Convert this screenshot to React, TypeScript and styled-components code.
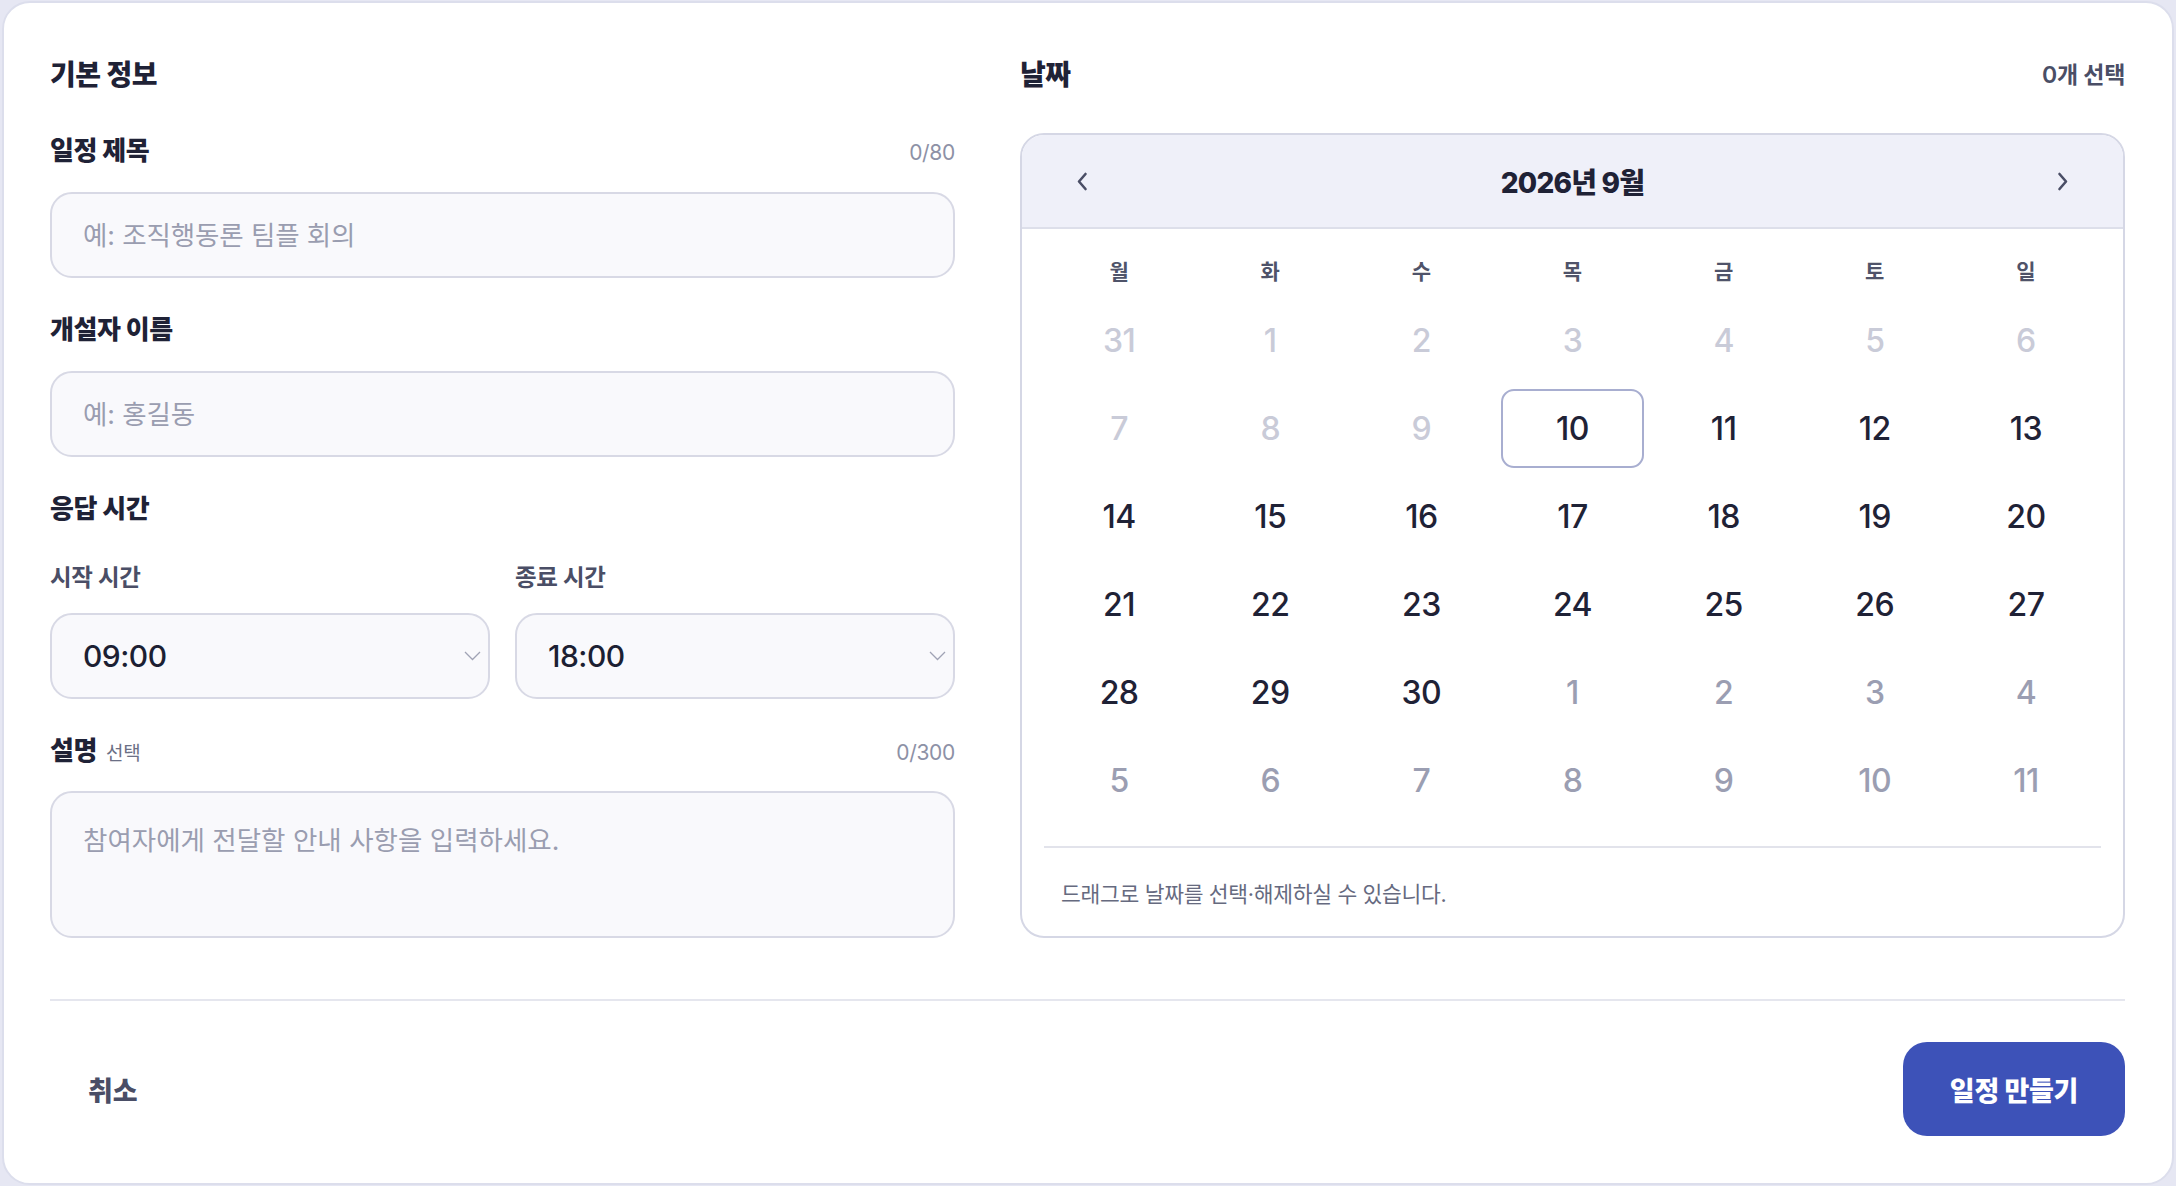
import styled, { createGlobalStyle } from "styled-components";

const GlobalStyle = createGlobalStyle`
  html, body {
    margin: 0;
    background: #e6e7f3;
  }
  body {
    font-family: "Inter", "Noto Sans CJK KR", "Noto Sans", sans-serif;
    color: #1f2236;
  }
  * {
    box-sizing: border-box;
  }
`;

const Page = styled.div`
  padding: 1px 2px;
`;

const Card = styled.div`
  background: #ffffff;
  border: 2px solid #dcdeec;
  border-radius: 28px;
  padding: 53px 47px 47px 46px;
`;

const Columns = styled.div`
  display: grid;
  grid-template-columns: 905px 1fr;
  column-gap: 65px;
`;

const Column = styled.div`
  display: flex;
  flex-direction: column;
`;

const SectionHead = styled.div`
  display: flex;
  justify-content: space-between;
  align-items: center;
  height: 34px;
  margin-bottom: 43px;
`;

const SectionTitle = styled.h2`
  margin: 0;
  font-size: 28px;
  font-weight: 800;
  letter-spacing: -0.4px;
  color: #1f2236;
`;

const SelectedCount = styled.span`
  font-size: 23px;
  font-weight: 600;
  color: #4a4e66;
  letter-spacing: -0.3px;
`;

const Fields = styled.div`
  display: flex;
  flex-direction: column;
  gap: 34px;
`;

const Field = styled.div<{ $gap?: number }>`
  display: flex;
  flex-direction: column;
  gap: ${(p) => p.$gap ?? 23}px;
`;

const FieldHead = styled.div`
  display: flex;
  justify-content: space-between;
  align-items: baseline;
  height: 36px;
  line-height: 36px;
`;

const Label = styled.label`
  font-size: 26px;
  font-weight: 800;
  color: #1f2236;
  letter-spacing: -0.4px;
  display: flex;
  align-items: baseline;
  gap: 9px;
`;

const Optional = styled.span`
  font-size: 19px;
  font-weight: 400;
  color: #6b6f85;
  letter-spacing: -0.3px;
`;

const Counter = styled.span`
  font-size: 21px;
  font-weight: 400;
  color: #8d91a6;
  letter-spacing: -0.3px;
`;

const TextInput = styled.input`
  height: 86px;
  width: 100%;
  border: 2px solid #d8d9e5;
  border-radius: 22px;
  background: #f9f9fc;
  padding: 0 31px;
  font-family: "Inter", "Noto Sans CJK KR", sans-serif;
  font-size: 26.5px;
  color: #1f2236;
  outline: none;
  letter-spacing: -0.1px;

  &::placeholder {
    color: #9a9db0;
  }
`;

const TextArea = styled.textarea`
  height: 147px;
  width: 100%;
  border: 2px solid #d8d9e5;
  border-radius: 22px;
  background: #f9f9fc;
  padding: 28px 31px;
  font-family: "Inter", "Noto Sans CJK KR", sans-serif;
  font-size: 26.5px;
  line-height: 38px;
  color: #1f2236;
  outline: none;
  resize: none;
  letter-spacing: 0;

  &::placeholder {
    color: #9a9db0;
  }
`;

const TimeGrid = styled.div`
  display: grid;
  grid-template-columns: 1fr 1fr;
  column-gap: 25px;
`;

const SubLabel = styled.span`
  font-size: 23.5px;
  font-weight: 700;
  color: #4a4e66;
  line-height: 28px;
  height: 28px;
  letter-spacing: -0.3px;
`;

const SelectBox = styled.div`
  height: 86px;
  border: 2px solid #d8d9e5;
  border-radius: 22px;
  background: #f9f9fc;
  padding: 0 7px 0 31px;
  display: flex;
  align-items: center;
  justify-content: space-between;
`;

const SelectValue = styled.span`
  font-size: 30px;
  font-weight: 500;
  color: #1c1f33;
  letter-spacing: -0.5px;
`;

const Calendar = styled.div`
  border: 2px solid #d5d7e5;
  border-radius: 24px;
  overflow: hidden;
  background: #ffffff;
`;

const CalHeader = styled.div`
  height: 94px;
  background: #eff0f9;
  border-bottom: 2px solid #dddfea;
  display: flex;
  align-items: center;
  justify-content: space-between;
  padding: 0 54px;
`;

const NavButton = styled.button`
  border: none;
  background: transparent;
  padding: 0;
  display: flex;
  align-items: center;
  cursor: pointer;
`;

const MonthTitle = styled.span`
  font-size: 28px;
  font-weight: 800;
  color: #1f2236;
  letter-spacing: -0.8px;
`;

const CalBody = styled.div`
  padding: 20px 26px 0;
`;

const WeekRow = styled.div`
  display: grid;
  grid-template-columns: repeat(7, 1fr);
  column-gap: 9px;
  height: 42px;
  align-items: center;
`;

const WeekDay = styled.span`
  text-align: center;
  font-size: 21px;
  font-weight: 700;
  color: #4f5369;
`;

const DayGrid = styled.div`
  display: grid;
  grid-template-columns: repeat(7, 1fr);
  grid-auto-rows: 79px;
  gap: 9px;
  margin-top: 10px;
`;

type DayKind = "past" | "today" | "current" | "next";

const dayColors: Record<DayKind, string> = {
  past: "#c9cbd8",
  today: "#1f2236",
  current: "#1f2236",
  next: "#9b9eb2",
};

const DayCell = styled.div<{ $kind: DayKind }>`
  display: flex;
  align-items: center;
  justify-content: center;
  font-size: 32px;
  font-weight: 500;
  letter-spacing: -0.5px;
  color: ${(p) => dayColors[p.$kind]};
  border-radius: 13px;
  border: 2px solid ${(p) => (p.$kind === "today" ? "#a8aed0" : "transparent")};
  user-select: none;
`;

const CalDivider = styled.div`
  height: 2px;
  background: #e2e3eb;
  margin: 26px 22px 0;
`;

const CalNote = styled.p`
  margin: 0;
  height: 88px;
  display: flex;
  align-items: center;
  padding-left: 39px;
  font-size: 21.5px;
  color: #666a7f;
  letter-spacing: -0.3px;
`;

const Divider = styled.hr`
  border: none;
  height: 2px;
  background: #e5e6ee;
  margin: 61px 0 0;
`;

const Footer = styled.div`
  display: flex;
  justify-content: space-between;
  align-items: center;
  margin-top: 41px;
`;

const CancelButton = styled.button`
  border: none;
  background: transparent;
  padding: 0 38px;
  height: 94px;
  font-family: "Inter", "Noto Sans CJK KR", sans-serif;
  font-size: 27px;
  font-weight: 800;
  color: #4a4e66;
  cursor: pointer;
`;

const SubmitButton = styled.button`
  border: none;
  background: #3d52b8;
  color: #ffffff;
  width: 222px;
  height: 94px;
  border-radius: 24px;
  font-family: "Inter", "Noto Sans CJK KR", sans-serif;
  font-size: 27px;
  font-weight: 800;
  letter-spacing: -0.3px;
  cursor: pointer;
`;

const ChevronDown = () => (
  <svg width="17" height="10" viewBox="0 0 17 10" fill="none">
    <polyline points="1,1 8.5,8.5 16,1" stroke="#a0a3b5" strokeWidth="1.3" />
  </svg>
);

const ChevronSide = ({ dir }: { dir: "left" | "right" }) => (
  <svg width="12" height="19" viewBox="0 0 12 19" fill="none">
    <polyline
      points={dir === "left" ? "9.5,2 3,9.5 9.5,17" : "2.5,2 9,9.5 2.5,17"}
      stroke="#4a4e66"
      strokeWidth="2.6"
      strokeLinecap="round"
      strokeLinejoin="round"
    />
  </svg>
);

const WEEKDAYS = ["월", "화", "수", "목", "금", "토", "일"];

const buildDays = () => {
  const days: { label: number; kind: DayKind }[] = [];
  for (let i = 0; i < 42; i++) {
    if (i === 0) {
      days.push({ label: 31, kind: "past" });
    } else if (i <= 30) {
      const kind: DayKind = i < 10 ? "past" : i === 10 ? "today" : "current";
      days.push({ label: i, kind });
    } else {
      days.push({ label: i - 30, kind: "next" });
    }
  }
  return days;
};

export default function App() {
  const days = buildDays();

  return (
    <Page>
      <GlobalStyle />
      <Card>
        <Columns>
          <Column>
            <SectionHead>
              <SectionTitle>기본 정보</SectionTitle>
            </SectionHead>
            <Fields>
              <Field>
                <FieldHead>
                  <Label>일정 제목</Label>
                  <Counter>0/80</Counter>
                </FieldHead>
                <TextInput placeholder="예: 조직행동론 팀플 회의" />
              </Field>
              <Field>
                <FieldHead>
                  <Label>개설자 이름</Label>
                </FieldHead>
                <TextInput placeholder="예: 홍길동" />
              </Field>
              <Field $gap={37}>
                <FieldHead>
                  <Label>응답 시간</Label>
                </FieldHead>
                <TimeGrid>
                  <Field $gap={21}>
                    <SubLabel>시작 시간</SubLabel>
                    <SelectBox>
                      <SelectValue>09:00</SelectValue>
                      <ChevronDown />
                    </SelectBox>
                  </Field>
                  <Field $gap={21}>
                    <SubLabel>종료 시간</SubLabel>
                    <SelectBox>
                      <SelectValue>18:00</SelectValue>
                      <ChevronDown />
                    </SelectBox>
                  </Field>
                </TimeGrid>
              </Field>
              <Field $gap={22}>
                <FieldHead>
                  <Label>
                    설명 <Optional>선택</Optional>
                  </Label>
                  <Counter>0/300</Counter>
                </FieldHead>
                <TextArea placeholder="참여자에게 전달할 안내 사항을 입력하세요." />
              </Field>
            </Fields>
          </Column>

          <Column>
            <SectionHead>
              <SectionTitle>날짜</SectionTitle>
              <SelectedCount>0개 선택</SelectedCount>
            </SectionHead>
            <Calendar>
              <CalHeader>
                <NavButton aria-label="이전 달">
                  <ChevronSide dir="left" />
                </NavButton>
                <MonthTitle>2026년 9월</MonthTitle>
                <NavButton aria-label="다음 달">
                  <ChevronSide dir="right" />
                </NavButton>
              </CalHeader>
              <CalBody>
                <WeekRow>
                  {WEEKDAYS.map((d) => (
                    <WeekDay key={d}>{d}</WeekDay>
                  ))}
                </WeekRow>
                <DayGrid>
                  {days.map((d, i) => (
                    <DayCell key={i} $kind={d.kind}>
                      {d.label}
                    </DayCell>
                  ))}
                </DayGrid>
              </CalBody>
              <CalDivider />
              <CalNote>드래그로 날짜를 선택·해제하실 수 있습니다.</CalNote>
            </Calendar>
          </Column>
        </Columns>

        <Divider />
        <Footer>
          <CancelButton>취소</CancelButton>
          <SubmitButton>일정 만들기</SubmitButton>
        </Footer>
      </Card>
    </Page>
  );
}
